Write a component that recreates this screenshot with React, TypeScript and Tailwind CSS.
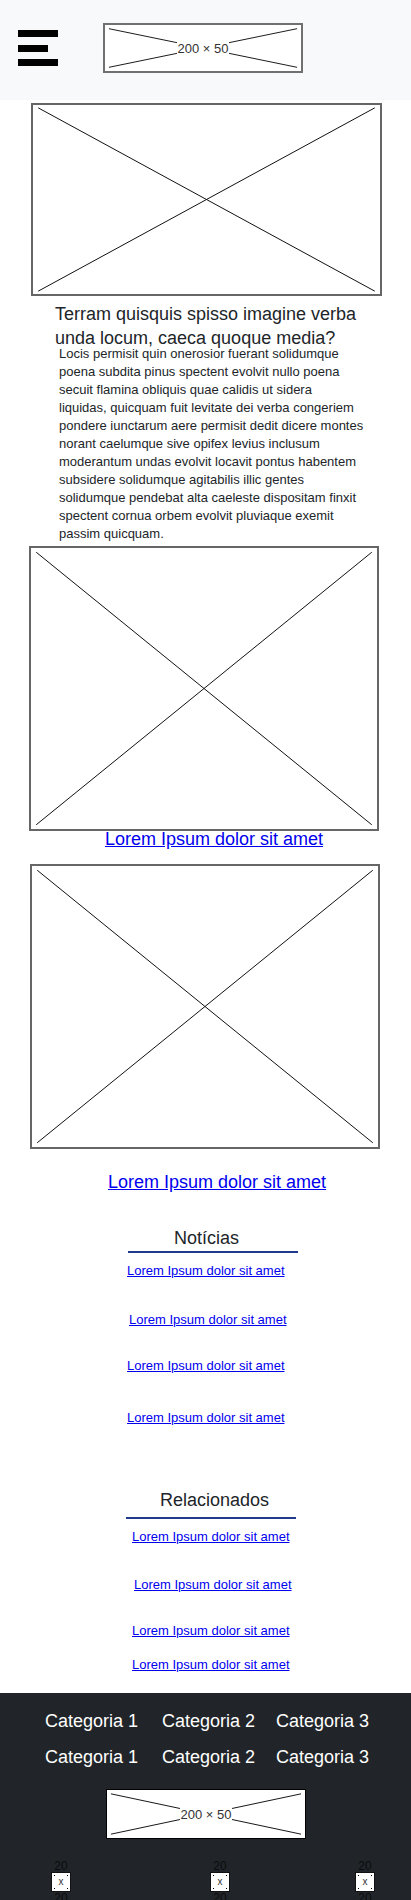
import React from "react";

function CrossBox({ className }: { className: string }) {
  return (
    <div className={`relative bg-white border-2 border-[#666] ${className}`}>
      <svg
        className="absolute inset-0 w-full h-full"
        viewBox="0 0 100 100"
        preserveAspectRatio="none"
      >
        <line x1="1.5" y1="1.5" x2="98.5" y2="98.5" stroke="#111" strokeWidth="1" vectorEffect="non-scaling-stroke" />
        <line x1="98.5" y1="1.5" x2="1.5" y2="98.5" stroke="#111" strokeWidth="1" vectorEffect="non-scaling-stroke" />
      </svg>
    </div>
  );
}

function LogoBox({ className }: { className: string }) {
  return (
    <div className={`relative bg-white w-[200px] h-[50px] flex items-center justify-center ${className}`}>
      <svg className="absolute inset-0 w-full h-full" viewBox="0 0 200 50" preserveAspectRatio="none">
        <line x1="4" y1="4" x2="196" y2="46" stroke="#111" strokeWidth="1" />
        <line x1="196" y1="4" x2="4" y2="46" stroke="#111" strokeWidth="1" />
      </svg>
      <span className="relative bg-white px-[1px] text-[13px] leading-[15px] text-[#333]">200 × 50</span>
    </div>
  );
}

function Icon20() {
  return (
    <div className="flex flex-col items-center w-[20px]">
      <span className="text-[12px] leading-[12px] text-[#0c0c0c]">20</span>
      <div className="relative w-[20px] h-[20px] bg-white border border-[#111] flex items-center justify-center">
        <span className="absolute top-[2px] left-[2px] w-[1px] h-[1px] bg-black" />
        <span className="absolute top-[2px] right-[2px] w-[1px] h-[1px] bg-black" />
        <span className="absolute bottom-[2px] left-[2px] w-[1px] h-[1px] bg-black" />
        <span className="absolute bottom-[2px] right-[2px] w-[1px] h-[1px] bg-black" />
        <span className="text-[10px] leading-[10px] text-[#333]">x</span>
      </div>
      <span className="text-[12px] leading-[12px] text-[#0c0c0c]">20</span>
    </div>
  );
}

const linkSmall = "block text-[13px] leading-[16px] text-[#0000ee] underline whitespace-nowrap";

export default function App() {
  return (
    <div className="w-[411px] min-h-[1900px] bg-white font-['Liberation_Sans',Arial,sans-serif] text-[#212529] flex flex-col">
      {/* header */}
      <header className="h-[100px] bg-[#f8f9fa] flex items-start shrink-0">
        <div className="flex flex-col ml-[18px] mt-[30px]">
          <span className="w-[40px] h-[7px] bg-black" />
          <span className="w-[30px] h-[7px] bg-black mt-[8px]" />
          <span className="w-[40px] h-[7px] bg-black mt-[7px]" />
        </div>
        <LogoBox className="ml-[45px] mt-[23px] border-2 border-[#707070]" />
      </header>

      <CrossBox className="ml-[31px] mt-[3px] w-[351px] h-[193px] shrink-0" />

      <h2 className="ml-[55px] mt-[6px] text-[18px] leading-[24px] font-normal whitespace-nowrap">
        Terram quisquis spisso imagine verba
        <br />
        unda locum, caeca quoque media?
      </h2>
      <p className="ml-[59px] mt-[-5px] text-[13px] leading-[18px] whitespace-nowrap">
        Locis permisit quin onerosior fuerant solidumque
        <br />
        poena subdita pinus spectent evolvit nullo poena
        <br />
        secuit flamina obliquis quae calidis ut sidera
        <br />
        liquidas, quicquam fuit levitate dei verba congeriem
        <br />
        pondere iunctarum aere permisit dedit dicere montes
        <br />
        norant caelumque sive opifex levius inclusum
        <br />
        moderantum undas evolvit locavit pontus habentem
        <br />
        subsidere solidumque agitabilis illic gentes
        <br />
        solidumque pendebat alta caeleste dispositam finxit
        <br />
        spectent cornua orbem evolvit pluviaque exemit
        <br />
        passim quicquam.
      </p>

      <CrossBox className="ml-[29px] mt-[3px] w-[350px] h-[285px] shrink-0" />
      <a href="#" className="relative ml-[105px] mt-[-2px] text-[18px] leading-[20px] text-[#0000ee] underline whitespace-nowrap self-start">
        Lorem Ipsum dolor sit amet
      </a>

      <CrossBox className="ml-[30px] mt-[15px] w-[350px] h-[285px] shrink-0" />
      <a href="#" className="ml-[108px] mt-[23px] text-[18px] leading-[20px] text-[#0000ee] underline whitespace-nowrap self-start">
        Lorem Ipsum dolor sit amet
      </a>

      {/* Notícias */}
      <h3 className="ml-[174px] mt-[36px] text-[18px] leading-[20px] font-normal">Notícias</h3>
      <div className="ml-[128px] mt-[3px] w-[170px] h-[2px] bg-[#1e3a8a]" />
      <div className="flex flex-col items-start">
        <a href="#" className={`${linkSmall} ml-[127px] mt-[10px]`}>Lorem Ipsum dolor sit amet</a>
        <a href="#" className={`${linkSmall} ml-[129px] mt-[33px]`}>Lorem Ipsum dolor sit amet</a>
        <a href="#" className={`${linkSmall} ml-[127px] mt-[30px]`}>Lorem Ipsum dolor sit amet</a>
        <a href="#" className={`${linkSmall} ml-[127px] mt-[36px]`}>Lorem Ipsum dolor sit amet</a>
      </div>

      {/* Relacionados */}
      <h3 className="ml-[160px] mt-[64px] text-[18px] leading-[20px] font-normal">Relacionados</h3>
      <div className="ml-[126px] mt-[7px] w-[170px] h-[2px] bg-[#1e3a8a]" />
      <div className="flex flex-col items-start">
        <a href="#" className={`${linkSmall} ml-[132px] mt-[10px]`}>Lorem Ipsum dolor sit amet</a>
        <a href="#" className={`${linkSmall} ml-[134px] mt-[32px]`}>Lorem Ipsum dolor sit amet</a>
        <a href="#" className={`${linkSmall} ml-[132px] mt-[30px]`}>Lorem Ipsum dolor sit amet</a>
        <a href="#" className={`${linkSmall} ml-[132px] mt-[18px]`}>Lorem Ipsum dolor sit amet</a>
      </div>

      {/* footer */}
      <footer className="mt-[20px] bg-[#212529] pt-[18px] pb-[20px] flex-1 flex flex-col">
        {[0, 1].map((row) => (
          <div key={row} className={`flex text-[18px] leading-[20px] text-white whitespace-nowrap ${row ? "mt-[16px]" : ""}`}>
            <span className="ml-[45px] w-[117px]">Categoria 1</span>
            <span className="w-[114px]">Categoria 2</span>
            <span>Categoria 3</span>
          </div>
        ))}
        <LogoBox className="ml-[106px] mt-[22px] border border-black" />
        <div className="flex mt-[21px]">
          <div className="ml-[51px]">
            <Icon20 />
          </div>
          <div className="ml-[139px]">
            <Icon20 />
          </div>
          <div className="ml-[125px]">
            <Icon20 />
          </div>
        </div>
      </footer>
    </div>
  );
}
